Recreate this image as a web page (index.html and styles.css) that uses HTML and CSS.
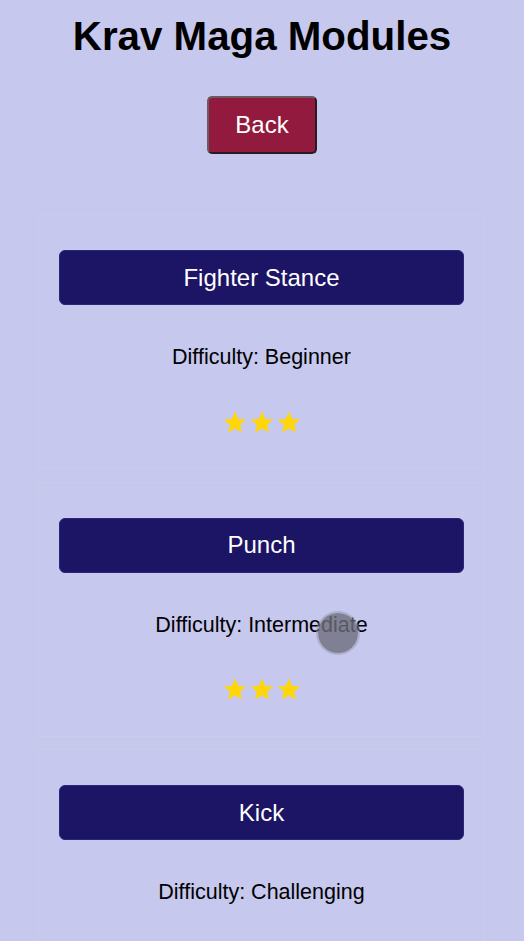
FILE: index.html
```html
<!DOCTYPE html>
<html lang="en">
<head>
<meta charset="utf-8">
<title>Krav Maga Modules</title>
<link rel="stylesheet" href="styles.css">
</head>
<body>
<main class="page">
  <h1 class="title">Krav Maga Modules</h1>
  <div class="back-wrap"><button class="back">Back</button></div>
  <section class="modules">
    <article class="card">
      <button class="module-btn">Fighter Stance</button>
      <p class="difficulty">Difficulty: Beginner</p>
      <div class="stars">
        <svg class="star" viewBox="0 0 24 24"><path d="M12 1.5l3.1 7.1 7.7.6-5.9 5 1.8 7.5L12 17.7l-6.7 4 1.8-7.5-5.9-5 7.7-.6z"/></svg>
        <svg class="star" viewBox="0 0 24 24"><path d="M12 1.5l3.1 7.1 7.7.6-5.9 5 1.8 7.5L12 17.7l-6.7 4 1.8-7.5-5.9-5 7.7-.6z"/></svg>
        <svg class="star" viewBox="0 0 24 24"><path d="M12 1.5l3.1 7.1 7.7.6-5.9 5 1.8 7.5L12 17.7l-6.7 4 1.8-7.5-5.9-5 7.7-.6z"/></svg>
      </div>
    </article>
    <article class="card">
      <button class="module-btn">Punch</button>
      <p class="difficulty">Difficulty: Intermediate</p>
      <div class="stars">
        <svg class="star" viewBox="0 0 24 24"><path d="M12 1.5l3.1 7.1 7.7.6-5.9 5 1.8 7.5L12 17.7l-6.7 4 1.8-7.5-5.9-5 7.7-.6z"/></svg>
        <svg class="star" viewBox="0 0 24 24"><path d="M12 1.5l3.1 7.1 7.7.6-5.9 5 1.8 7.5L12 17.7l-6.7 4 1.8-7.5-5.9-5 7.7-.6z"/></svg>
        <svg class="star" viewBox="0 0 24 24"><path d="M12 1.5l3.1 7.1 7.7.6-5.9 5 1.8 7.5L12 17.7l-6.7 4 1.8-7.5-5.9-5 7.7-.6z"/></svg>
      </div>
    </article>
    <article class="card">
      <button class="module-btn">Kick</button>
      <p class="difficulty">Difficulty: Challenging</p>
      <div class="stars">
        <svg class="star" viewBox="0 0 24 24"><path d="M12 1.5l3.1 7.1 7.7.6-5.9 5 1.8 7.5L12 17.7l-6.7 4 1.8-7.5-5.9-5 7.7-.6z"/></svg>
        <svg class="star" viewBox="0 0 24 24"><path d="M12 1.5l3.1 7.1 7.7.6-5.9 5 1.8 7.5L12 17.7l-6.7 4 1.8-7.5-5.9-5 7.7-.6z"/></svg>
        <svg class="star" viewBox="0 0 24 24"><path d="M12 1.5l3.1 7.1 7.7.6-5.9 5 1.8 7.5L12 17.7l-6.7 4 1.8-7.5-5.9-5 7.7-.6z"/></svg>
      </div>
    </article>
  </section>
  <div class="touch-dot"></div>
</main>
</body>
</html>
```

FILE: styles.css
```css
html, body {
  margin: 0;
  padding: 0;
}
body {
  background: #c6c8ee;
  font-family: "Liberation Sans", Arial, sans-serif;
  color: #000;
  overflow: hidden;
}
.page {
  position: relative;
  min-height: 941px;
  padding-top: 14px;
  box-sizing: border-box;
}
.title {
  margin: 0;
  font-size: 40.3px;
  font-weight: bold;
  line-height: 46px;
  text-align: center;
}
.back-wrap {
  display: flex;
  justify-content: center;
  margin-top: 36px;
}
.back {
  width: 110px;
  height: 58px;
  background: #921a3e;
  color: #fff;
  font-family: "Liberation Sans", Arial, sans-serif;
  font-size: 24px;
  border: 2px solid #2a1a22;
  border-top-color: #6a5a62;
  border-left-color: #6a5a62;
  border-radius: 5px;
  padding: 0;
}
.modules {
  display: flex;
  flex-direction: column;
  gap: 12.5px;
  margin: 60px 39px 0 38px;
}
.card {
  border: 1px solid #cbcce6;
  padding: 20px;
  display: flex;
  flex-direction: column;
  align-items: stretch;
}
.module-btn {
  margin-top: 15px;
  height: 55px;
  background: #1c1464;
  color: #fff;
  border: 1px solid #2c2678;
  border-radius: 6px;
  font-family: "Liberation Sans", Arial, sans-serif;
  font-size: 24px;
  padding: 0;
}
.difficulty {
  margin: 40px 0 0;
  font-size: 21.5px;
  line-height: 24px;
  text-align: center;
}
.stars {
  margin: 42px 0 15px;
  display: flex;
  justify-content: center;
  height: 22px;
  align-items: center;
}
.star {
  width: 26px;
  height: 25px;
  fill: #ffd60a;
  margin: 0 0.5px;
}
.touch-dot {
  position: absolute;
  left: 318px;
  top: 613px;
  width: 40px;
  height: 40px;
  border-radius: 50%;
  background: rgba(110, 110, 125, 0.8);
  box-shadow: 0 0 0 2px rgba(150, 150, 165, 0.5);
}
```
